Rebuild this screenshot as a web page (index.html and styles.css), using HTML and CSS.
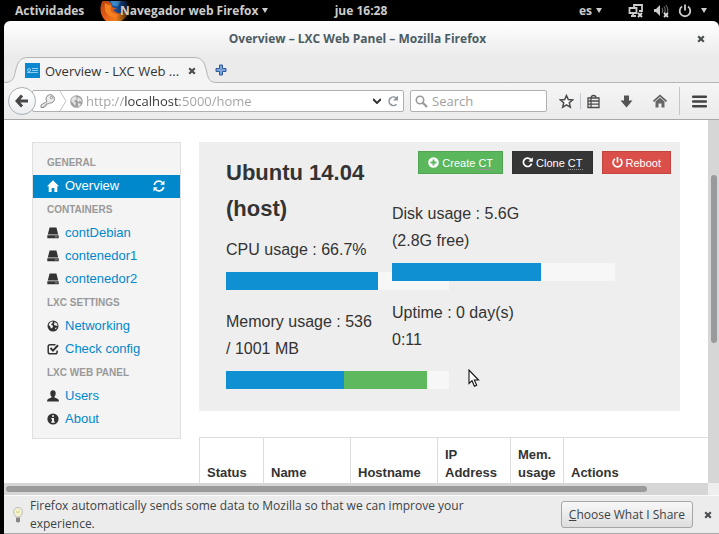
FILE: index.html
```html
<!DOCTYPE html>
<html lang="es">
<head>
<meta charset="utf-8">
<title>Overview - LXC Web Panel</title>
<link rel="stylesheet" href="styles.css">
</head>
<body>
<svg class="defs" aria-hidden="true">
  <defs>
    <symbol id="i-close" viewBox="0 0 8 8"><path d="M1.2 1.2 6.8 6.8M6.8 1.2 1.2 6.8" stroke="currentColor" stroke-width="2.2"/></symbol>
    <symbol id="i-disk" viewBox="0 0 12 12"><path d="M2.600 .5h6.800l1.800 7H.8zM.3 8.300h11.400v3H.3z" fill="currentColor"/><path d="M8 9.800h2.500" stroke="#ddd" stroke-width=".6"/></symbol>
  </defs>
</svg>

<header class="topbar">
  <button class="top-item activities">Actividades</button>
  <button class="top-item app-menu">
    <svg class="fox" viewBox="0 0 36 22" aria-hidden="true">
      <defs><radialGradient id="glow" cx=".5" cy=".5" r=".5"><stop offset=".6" stop-color="#4a2205"/><stop offset="1" stop-color="#000"/></radialGradient>
      <linearGradient id="fire" x1="0" x2="1" y1="0" y2="1"><stop offset="0" stop-color="#b5400c"/><stop offset=".5" stop-color="#e8601a"/><stop offset="1" stop-color="#f6a01c"/></linearGradient>
      <linearGradient id="fade" x1="0" x2="1"><stop offset=".5" stop-color="#000" stop-opacity="0"/><stop offset="1" stop-color="#000"/></linearGradient></defs>
      <ellipse cx="21" cy="8" rx="16" ry="18" fill="url(#glow)"/>
      <path d="M3 0C-1 8 1 17 7 22h17c5-3 8-8 9-14l-7 2-12-10z" fill="url(#fire)"/>
      <path d="M9 0h20c3 5 2 10-2 12-6 3-10 1-12-2l4-2c-4 0-7-2-6-5z" fill="#1c4f96"/>
      <path d="M12 0h11l-3 6-6-1z" fill="#3a86c9"/>
      <path d="M6 2c2 2 5 3 7 3l-1 4c1 5 6 7 12 5-3 4-10 6-14 2-4-3-5-8-4-14z" fill="#f4811f"/>
      <path d="M0 0h36v22H0z" fill="url(#fade)"/>
    </svg>
    <span class="app-name">Navegador web Firefox</span><i class="caret"></i>
  </button>
  <time class="clock">jue 16:28</time>
  <div class="tray">
    <button class="top-item lang">es<i class="caret"></i></button>
    <button class="top-item system" aria-label="Sistema">
      <svg width="16" height="14" viewBox="0 0 16 14" aria-hidden="true"><path d="M6 3V1h8v6h-3M1.5 4h7v5h-7zM3 12h5M5 9v3" fill="none" stroke="#ccc" stroke-width="1.8"/><path d="m10 9 4 4m0-4-4 4" stroke="#ddd" stroke-width="1.8"/></svg>
      <svg width="16" height="14" viewBox="0 0 16 14" aria-hidden="true"><path d="M1 5h2l4-4v11L3 8H1z" fill="#ccc"/><path d="M9 4q1.500 2.500 0 5M11 2.500q2.500 4 0 7M13 1q3 5 1 8" fill="none" stroke="#666" stroke-width="1.200"/><path d="m11 9 4 4m0-4-4 4" stroke="#ddd" stroke-width="1.800"/></svg>
      <svg width="14" height="14" viewBox="0 0 14 14" aria-hidden="true"><path d="M4 2.600a5.300 5.300 0 1 0 6 0M7 .5v6" fill="none" stroke="#ccc" stroke-width="1.800"/></svg>
      <i class="caret"></i>
    </button>
  </div>
</header>

<div class="window">
  <div class="titlebar">
    <span class="window-title">Overview – LXC Web Panel – Mozilla Firefox</span>
    <button class="icon-btn" aria-label="Cerrar ventana"><svg width="8" height="8"><use href="#i-close"/></svg></button>
  </div>

  <div class="tabs">
    <div class="tab">
      <svg class="tab-shape" viewBox="0 0 213 27" aria-hidden="true"><path d="M0 27V25.500C9 25.500 10 21 11.500 14 13.500 5 16 .5 24 .5H190C198 .5 200.500 5 202.500 14 204 21 205 25.500 213 25.500V27z" fill="#f4f4f4"/><path d="M0 25.500C9 25.500 10 21 11.500 14 13.500 5 16 .5 24 .5H190C198 .5 200.500 5 202.500 14 204 21 205 25.500 213 25.500" fill="none" stroke="#b4b4b4"/></svg>
      <svg class="favicon" width="15" height="15" viewBox="0 0 15 15" aria-hidden="true"><path d="M0 0h15v15H0z" fill="#0c87cf"/><circle cx="4" cy="7" r="1.500" fill="none" stroke="#b5dff5" stroke-width=".8"/><path d="M7 5.500h6M7 7.500h6M2 9.500h11" stroke="#b5dff5" stroke-width=".8"/></svg>
      <span class="tab-label">Overview - LXC Web ...</span>
      <button class="icon-btn tab-close" aria-label="Cerrar pestaña"><svg width="8" height="8"><use href="#i-close"/></svg></button>
    </div>
    <button class="icon-btn new-tab" aria-label="Nueva pestaña"><svg width="12" height="12" viewBox="0 0 12 12"><path d="M4.500 1h3v3.500H11v3H7.500V11h-3V7.500H1v-3h3.500z" fill="#7ba3d8" stroke="#305a99"/></svg></button>
  </div>

  <div class="toolbar">
    <button class="back" aria-label="Atrás"><svg width="14" height="14" viewBox="0 0 14 14"><path d="M7 1.500 2 7l5 5.500M2.500 7H13" fill="none" stroke="#484848" stroke-width="3"/></svg></button>
    <div class="field urlbar">
      <svg width="16" height="16" viewBox="0 0 16 16" aria-hidden="true"><path d="M7 8.500a4.200 4.200 0 1 1 2.500 1.500L8 11H6v2H4v1.500H1V12z" fill="#eee" stroke="#888"/><circle cx="11.500" cy="4.500" r="1.200" fill="#fff" stroke="#888"/></svg>
      <svg width="8" height="20" viewBox="0 0 8 20" aria-hidden="true"><path d="m1 0 6 10-6 10" fill="none" stroke="#c4c4c4"/></svg>
      <svg class="globe" width="13" height="13" viewBox="0 0 13 13" aria-hidden="true"><circle cx="6.500" cy="6.500" r="6.300" fill="#a0a0a0"/><path d="M2 3l3-2 2 2-1 2-2 1 2 2-1 3-2-3-2-2zM8 2l3 2 1 3-2-1-2 1-1-2zM8 8l3 1-2 3-1-1z" fill="#e2e2e2"/></svg>
      <input class="url" type="text" value="http://localhost:5000/home" aria-label="Dirección">
      <svg width="8" height="6" viewBox="0 0 8 6" aria-hidden="true"><path d="m0 1 4 4 4-4" fill="none" stroke="#333" stroke-width="2"/></svg>
      <button class="icon-btn reload" aria-label="Recargar"><svg width="12" height="12" viewBox="0 0 12 12"><path d="M9.500 9.200A4.300 4.300 0 1 1 9.200 3" fill="none" stroke="#8c959e" stroke-width="1.600"/><path d="M11 .5v5H6z" fill="#8c959e"/></svg></button>
    </div>
    <div class="field search">
      <svg width="13" height="13" viewBox="0 0 13 13" aria-hidden="true"><circle cx="5" cy="5" r="3.700" fill="none" stroke="#999" stroke-width="1.600"/><path d="m7.800 7.800 4.200 4.200" stroke="#999" stroke-width="2.200"/></svg>
      <input type="text" placeholder="Search" aria-label="Search">
    </div>
    <div class="tools">
      <button class="icon-btn" aria-label="Marcador"><svg width="15" height="15" viewBox="0 0 15 15"><path d="m7.500 1.500 1.800 4 4.300.4-3.300 2.900 1 4.300-3.800-2.300-3.800 2.300 1-4.300L1.400 5.900l4.300-.4z" fill="#fff" stroke="#4b4b4b" stroke-width="1.500"/></svg></button>
      <i class="divider short"></i>
      <button class="icon-btn" aria-label="Lista de marcadores"><svg width="13" height="15" viewBox="0 0 13 15"><path d="M1 4h11v9.500H1zM4 4q0-2.500 2.500-2.500T9 4M1 7h11M1 10.200h11M4 4v9" fill="none" stroke="#4b4b4b" stroke-width="1.300"/></svg></button>
      <button class="icon-btn" aria-label="Descargas"><svg width="13" height="13" viewBox="0 0 13 13"><path d="M4 .5h5v5h3.500l-6 7-6-7H4z" fill="#555"/></svg></button>
      <button class="icon-btn" aria-label="Inicio"><svg width="14" height="14" viewBox="0 0 14 14"><path d="m.5 7.500 6.500-6 6.500 6" fill="none" stroke="#5a5a5a" stroke-width="1.600"/><path d="m2.500 7.500 4.500-4 4.500 4v6H8.500v-4h-3v4h-3z" fill="#666"/></svg></button>
      <i class="divider"></i>
      <button class="icon-btn" aria-label="Menú"><svg width="15" height="13" viewBox="0 0 15 13"><path d="M1 1.800h13M1 6.500h13M1 11.200h13" stroke="#444" stroke-width="2.400" stroke-linecap="round"/></svg></button>
    </div>
  </div>

  <div class="viewport">
    <div class="page">
      <nav class="sidebar">
        <h2>General</h2>
        <a class="active" href="#overview"><svg width="12" height="12" viewBox="0 0 12 12"><path d="M6 .3 12 6.300h-1.700V12H7.400V8H4.600v4H1.700V6.300H0z" fill="#fff"/></svg>Overview
          <svg class="refresh" width="12" height="12" viewBox="0 0 12 12"><path d="M1.300 5A4.700 4.700 0 0 1 9.500 2.800M10.700 7A4.700 4.700 0 0 1 2.500 9.200" fill="none" stroke="#fff" stroke-width="1.600"/><path d="M11.500.5v4.300H7.200zM.5 11.500V7.200h4.300z" fill="#fff"/></svg></a>
        <h2>Containers</h2>
        <a href="#contDebian"><svg width="12" height="12"><use href="#i-disk"/></svg>contDebian</a>
        <a href="#contenedor1"><svg width="12" height="12"><use href="#i-disk"/></svg>contenedor1</a>
        <a href="#contenedor2"><svg width="12" height="12"><use href="#i-disk"/></svg>contenedor2</a>
        <h2>LXC Settings</h2>
        <a href="#network"><svg width="12" height="12" viewBox="0 0 12 12"><circle cx="6" cy="6" r="5.500" fill="#333"/><path d="M3.500 1.800 6 1.500 5.500 3 4 4.500l2 1.300-.5 2L4 8.500 3 6 1.500 5zM7.500 2l2.500 1.500.7 2.500-2-.5L7 5z" fill="#f4f4f4"/><path d="m8 8 2-.5-1.500 2z" fill="#f4f4f4"/></svg>Networking</a>
        <a href="#check"><svg width="12" height="12" viewBox="0 0 12 12"><path d="M8.500 1.700H3Q1.200 1.700 1.200 3.500V9q0 1.800 1.800 1.800h5.300q1.800 0 1.800-1.800V7.500" fill="none" stroke="#333" stroke-width="1.500"/><path d="m3.500 5 2.500 2.600L11 2.300" fill="none" stroke="#333" stroke-width="2"/></svg>Check config</a>
        <h2>LXC Web Panel</h2>
        <a href="#users"><svg width="12" height="12" viewBox="0 0 12 12"><path d="M6 .3c2 0 2.800 1.500 2.700 3.200C8.600 5 8 6 7.500 6.600v1l3 1.200Q12 9.500 12 11.500H0Q0 9.500 1.500 8.800l3-1.200v-1C4 6 3.400 5 3.300 3.500 3.200 1.800 4 .3 6 .3z" fill="#333"/></svg>Users</a>
        <a href="#about"><svg width="12" height="12" viewBox="0 0 12 12"><circle cx="6" cy="6" r="5.600" fill="#333"/><path d="M5 2.200h2v1.600H5zM4.300 5H7v3.400h.8v1.300H4.200V8.400H5V6.200h-.7z" fill="#f4f4f4"/></svg>About</a>
      </nav>

      <main class="main">
        <section class="hero">
          <div class="stats">
            <h1>Ubuntu 14.04 (host)</h1>
            <p>CPU usage : 66.7%</p>
            <div class="progress"><i class="bar" style="width:68%"></i></div>
            <p>Memory usage : 536 / 1001 MB</p>
            <div class="progress"><i class="bar" style="width:53%"></i><i class="bar cache" style="width:37%"></i></div>
          </div>
          <div class="side">
            <div class="actions">
              <button class="btn create"><svg width="11" height="11" viewBox="0 0 11 11"><circle cx="5.500" cy="5.500" r="5.300" fill="#fff"/><path d="M5.500 2.500v6M2.500 5.500h6" stroke="#5bb75b" stroke-width="1.800"/></svg><span>Create <abbr>CT</abbr></span></button>
              <button class="btn clone"><svg width="11" height="11" viewBox="0 0 11 11"><path d="M8.800 2.600A4.200 4.200 0 1 0 9.600 6.500" fill="none" stroke="#fff" stroke-width="1.700"/><path d="M10.800.3v4.500H6.300z" fill="#fff"/></svg><span>Clone <abbr>CT</abbr></span></button>
              <button class="btn reboot"><svg width="11" height="11" viewBox="0 0 11 11"><path d="M3 1.900a4.400 4.400 0 1 0 5 0M5.500 0v5.500" fill="none" stroke="#fff" stroke-width="1.700"/></svg><span>Reboot</span></button>
            </div>
            <div class="stats">
              <p>Disk usage : 5.6G (2.8G free)</p>
              <div class="progress"><i class="bar" style="width:67%"></i></div>
              <p>Uptime : 0 day(s) 0:11</p>
            </div>
          </div>
        </section>

        <table class="containers">
          <colgroup><col class="c-status"><col class="c-name"><col class="c-name"><col class="c-ip"><col class="c-mem"><col></colgroup>
          <thead><tr><th>Status</th><th>Name</th><th>Hostname</th><th>IP Address</th><th>Mem. usage</th><th>Actions</th></tr></thead>
        </table>
      </main>
    </div>
    <div class="vscroll"><i></i></div>
    <div class="hscroll"><i></i></div>
    <svg class="pointer" width="12" height="19" viewBox="0 0 12 19" aria-hidden="true"><path d="M1 1v13.500l3-2.800 2.400 5.600 2.300-1-2.400-5.300h4.200z" fill="#fff" stroke="#111" stroke-width="1.100"/></svg>
  </div>

  <footer class="notice">
    <svg width="10" height="16" viewBox="0 0 10 16" aria-hidden="true"><path d="M3 10Q.5 7 .5 4.800a4.500 4.300 0 0 1 9 0Q9.500 7 7 10z" fill="#f3f1cf" stroke="#bbb"/><path d="M3 4.500l2 1 2-1" fill="none" stroke="#d9cf6a"/><path d="M3 10.500h4v3.500l-1 1.500H4L3 14z" fill="#999"/><path d="M3 12h4M3 14h4" stroke="#666" stroke-width=".7"/></svg>
    <p>Firefox automatically sends some data to Mozilla so that we can improve your experience.</p>
    <button class="choose"><u>C</u>hoose What I Share</button>
    <button class="icon-btn" aria-label="Cerrar aviso"><svg width="8" height="8"><use href="#i-close"/></svg></button>
  </footer>
</div>
</body>
</html>
```
FILE: styles.css
```css
* { box-sizing: border-box; }
body {
  margin: 0;
  height: 100vh;
  display: flex;
  flex-direction: column;
  overflow: hidden;
  background: #000;
  color: #333;
  font: 12px/18px "Open Sans", "Noto Sans", sans-serif;
}
h1, h2, p { margin: 0; }
button, input { font: inherit; color: inherit; padding: 0; margin: 0; border: 0; background: none; }
svg { flex: none; display: block; }
.defs { position: absolute; width: 0; height: 0; }

/* Desktop bar */
.topbar {
  display: grid;
  grid-template-columns: 1fr auto 1fr;
  grid-template-areas: "left clock tray";
  align-items: center;
  height: 21px;
  flex: none;
  padding: 0 12px 0 15px;
  color: #ccc;
  font-weight: 700;
}
.activities { grid-area: left; justify-self: start; }
.app-menu { grid-area: left; justify-self: start; margin-left: 105px; }
.clock { grid-area: clock; }
.tray { grid-area: tray; justify-self: end; display: flex; gap: 26px; }
.top-item { display: flex; align-items: center; gap: 4px; position: relative; }
.system { gap: 9px; }
.app-name { position: relative; white-space: nowrap; }
.fox { position: absolute; left: -22px; top: -1px; width: 36px; height: 20px; }
.caret { border: 3px solid transparent; border-top: 5px solid #ccc; border-bottom: 0; }

/* Browser window */
.window {
  flex: 1;
  min-height: 0;
  display: flex;
  flex-direction: column;
  margin-left: 4px;
  border-radius: 6px 6px 0 0;
  background: #ebebeb linear-gradient(#fff, #ebebeb) no-repeat top / 100% 36px;
  overflow: hidden;
}
.titlebar {
  display: flex;
  align-items: center;
  height: 36px;
  flex: none;
  padding-right: 14px;
  color: #4c5c63;
}
.window-title { flex: 1; padding-left: 14px; text-align: center; font-weight: 700; }
.icon-btn { display: flex; align-items: center; justify-content: center; color: #4a4f52; }
.tabs { display: flex; height: 26px; flex: none; border-bottom: 1px solid #b4b4b4; }
.tab {
  position: relative;
  display: flex;
  align-items: center;
  width: 207px;
  height: 27px;
  padding: 0 14px 0 21px;
}
.tab-shape { position: absolute; left: 0; top: 0; width: 213px; height: 27px; }
.favicon, .tab-label, .tab-close { position: relative; }
.tab-label { flex: 1; margin-left: 5px; font-size: 13px; white-space: nowrap; }
.tab-close { margin-right: 1px; }
.new-tab { position: relative; margin-left: 4px; }

.toolbar {
  display: flex;
  align-items: center;
  height: 37px;
  flex: none;
  padding: 0 12px 0 4px;
  background: linear-gradient(#f5f5f5, #ebebeb);
  border-bottom: 1px solid #a8a8a8;
}
.back {
  position: relative;
  display: flex;
  align-items: center;
  justify-content: center;
  width: 28px;
  height: 28px;
  border: 1px solid #a9b0b8;
  border-radius: 50%;
  background: linear-gradient(#fff, #eceef0);
}
.field {
  display: flex;
  align-items: center;
  height: 22px;
  border: 1px solid #b0b0b0;
  border-radius: 2px;
  background: #fff;
  font-size: 13px;
}
.field input { flex: 1; min-width: 0; outline: 0; height: 20px; }
.urlbar { flex: 1; margin-left: -4px; padding: 0 4px 0 7px; gap: 3px; }
.urlbar .reload { margin-left: 3px; }
.urlbar .url {
  color: transparent;
  background: linear-gradient(to right, #a0a0a0 38px, #333 38px 94px, #a0a0a0 94px);
  -webkit-background-clip: text;
  background-clip: text;
}
.search { width: 137px; margin-left: 6px; padding: 0 4px; gap: 4px; }
.search input::placeholder { color: #a0a0a0; }
.tools { display: flex; align-items: center; gap: 12px; margin-left: 12px; }
.tools .short { height: 16px; margin: 0 -6px; }
.divider { width: 1px; height: 28px; background: #c3c7cb; }
.tools .icon-btn + .icon-btn { margin-left: 8px; }

/* Scrolling area */
.viewport {
  flex: 1;
  min-height: 0;
  display: grid;
  grid-template: minmax(0, 1fr) 12px / minmax(0, 1fr) 11px;
  position: relative;
  background: #eee;
  overflow: hidden;
}
.vscroll, .hscroll { background: #d6d6d6; }
.vscroll i { display: block; width: 6px; height: 168px; margin: 55px 0 0 3px; border-radius: 3px; background: #999a9b; }
.hscroll { grid-row: 2; }
.hscroll i { display: block; width: 91%; height: 6px; margin: 3px 0 0 2px; border-radius: 3px; background: #999a9b; }
.pointer { position: absolute; left: 464px; top: 249px; }

.page {
  display: grid;
  grid-template-columns: 149px minmax(0, 1fr);
  gap: 18px;
  align-items: start;
  padding: 22px 28px 0 28px;
  background: #fff;
  overflow: hidden;
  font: 13px/18px "Liberation Sans", sans-serif;
}
.sidebar { padding: 8px 0 7px; border: 1px solid #e0e0e0; background: #f4f4f4; }
.sidebar h2 {
  padding: 0 14px;
  color: #999;
  font-size: 10px;
  line-height: 24px;
  text-transform: uppercase;
}
.sidebar a {
  display: flex;
  align-items: center;
  gap: 6px;
  height: 23px;
  padding: 0 15px 2px 14px;
  color: #08c;
  text-decoration: none;
}
.sidebar a.active { background: #08c; color: #fff; }
.refresh { margin-left: auto; }
.sidebar svg { color: #333; }

.hero {
  display: grid;
  grid-template-columns: 149px minmax(0, 1fr);
  gap: 17px;
  padding: 9px 9px 4px 27px;
  background: #eee;
}
.stats { width: 149px; }
.hero > .stats { padding-top: 4px; }
.hero h1 { margin-bottom: 9px; font-size: 22px; line-height: 36px; }
.stats p { font-size: 16px; line-height: 27px; }
.progress {
  position: relative;
  display: flex;
  width: 223px;
  height: 18px;
  margin: 9px 0 18px;
  background: #f7f7f7;
}
.bar { background: #0e90d2; }
.bar.cache { background: #5eb95e; }
.actions { display: flex; justify-content: flex-end; gap: 9px; margin-bottom: 26px; }
.btn {
  display: flex;
  align-items: center;
  gap: 3px;
  height: 23px;
  padding: 0 9px;
  border: 1px solid rgba(0, 0, 0, .1);
  color: #fff;
  font-size: 11px;
}
.btn abbr { border-bottom: 1px dotted #999; }
.create { background: #5bb75b; }
.clone { background: #363636; }
.reboot { background: #da4f49; }

.containers {
  width: 560px;
  margin-top: 26px;
  table-layout: fixed;
  border-spacing: 0;
  border: 1px solid #ddd;
  border-left: 0;
}
.containers th { padding: 8px 7px; border-left: 1px solid #ddd; text-align: left; vertical-align: bottom; }
.c-status { width: 64px; }
.c-name { width: 87px; }
.c-ip { width: 73px; }
.c-mem { width: 53px; }

/* Notification bar */
.notice {
  display: flex;
  align-items: center;
  flex: none;
  height: 39px;
  padding: 0 7px 0 9px;
  border-top: 1px solid #fafafa;
  border-bottom: 1px solid #aaa;
  background: #ececec;
  color: #3c4346;
}
.notice p { flex: 1; margin: 0 60px 0 7px; }
.choose {
  height: 27px;
  margin-right: 11px;
  padding: 0 7px;
  border: 1px solid #a6a6a6;
  border-radius: 3px;
  background: linear-gradient(#f8f8f8, #dedede);
}
```
